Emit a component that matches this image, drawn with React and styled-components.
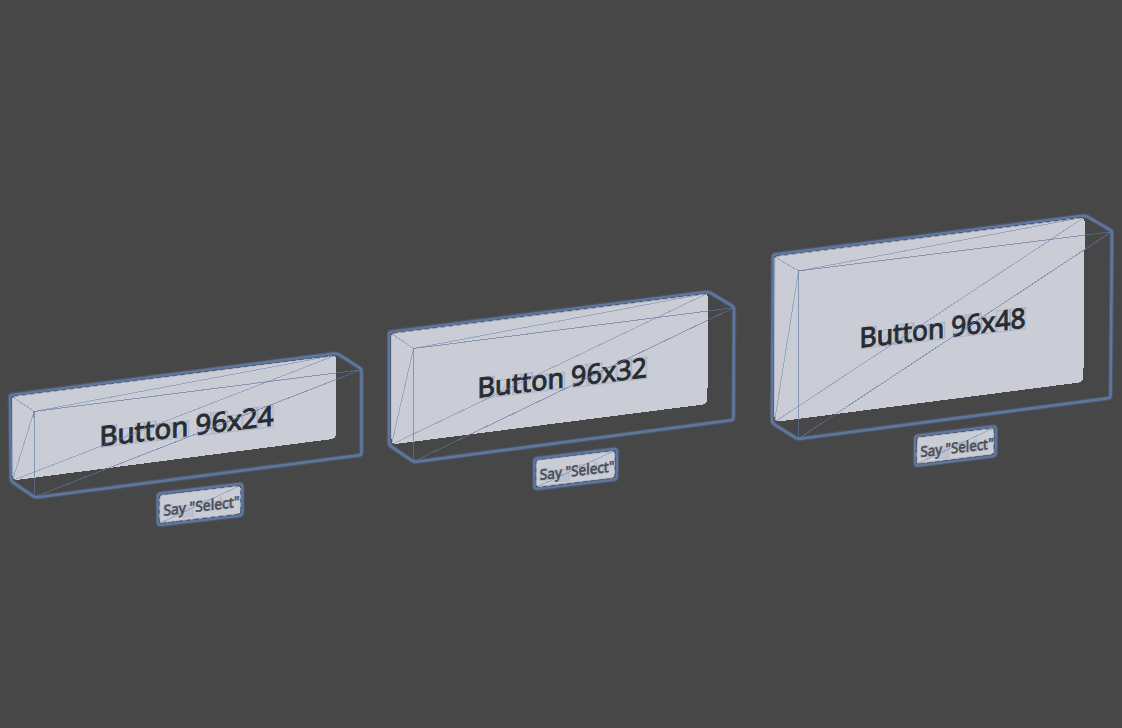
import React from 'react';
import styled, { createGlobalStyle } from 'styled-components';

const GlobalStyle = createGlobalStyle`
  body {
    margin: 0;
    background: #474747;
  }
`;

const Viewport = styled.main`
  width: 1122px;
  height: 728px;
  overflow: hidden;
  background: #474747;
`;

const Stage = styled.svg`
  display: block;
  width: 100%;
  height: 100%;
`;

const Face = styled.path`
  fill: #cacdd5;
  shape-rendering: crispEdges;
`;

const Seam = styled.path`
  fill: none;
  stroke: #474b54;
  stroke-width: 0.8;
  stroke-dasharray: 4 4;
`;

const Halo = styled.path`
  fill: none;
  stroke: #5a79ad;
  stroke-opacity: 0.35;
  stroke-width: 4.8;
  stroke-linejoin: round;
`;

const Outline = styled.path`
  fill: none;
  stroke: #60769c;
  stroke-width: 2.6;
  stroke-linejoin: round;
`;

const Edge = styled.path`
  fill: none;
  stroke: #5f779f;
  stroke-width: 1;
  stroke-opacity: ${(p) => (p.$strong ? 0.64 : 0.44)};
  shape-rendering: crispEdges;
`;

const GlyphQuad = styled.path`
  fill: #7180a5;
  fill-opacity: ${(p) => (p.$small ? 0.14 : 0.02)};
  stroke: #7180a5;
  stroke-width: 0.9;
  stroke-opacity: ${(p) => (p.$small ? 0.18 : 0.34)};
`;

const Label = styled.text`
  font-family: 'Noto Sans', 'Open Sans', sans-serif;
  font-size: ${(p) => (p.$small ? 14.6 : 27.4)}px;
  fill: ${(p) => (p.$small ? '#484c55' : '#282c32')};
  stroke: ${(p) => (p.$small ? '#484c55' : '#282c32')};
  stroke-width: ${(p) => (p.$small ? 0.55 : 0.95)}px;
  white-space: pre;
`;

const poly = (pts, close = true) =>
  'M' + pts.map((p) => p.join(' ')).join('L') + (close ? 'Z' : '');

function rounded(pts, r) {
  const toward = (a, b) => {
    const d = Math.hypot(b[0] - a[0], b[1] - a[1]);
    return [a[0] + ((b[0] - a[0]) * r) / d, a[1] + ((b[1] - a[1]) * r) / d];
  };
  return (
    pts
      .map((p, i) => {
        const a = toward(p, pts[(i + pts.length - 1) % pts.length]);
        const b = toward(p, pts[(i + 1) % pts.length]);
        return `${i ? 'L' : 'M'}${a.join(' ')}Q${p.join(' ')} ${b.join(' ')}`;
      })
      .join('') + 'Z'
  );
}

/* Glyph boxes as [left, right, top, bottom] fractions of the label width and font size. */
const BUTTON_GLYPHS = [
  [0, 0.088, 0.74, -0.03], [0.105, 0.185, 0.56, -0.03], [0.2, 0.255, 0.69, -0.03],
  [0.265, 0.32, 0.69, -0.03], [0.328, 0.413, 0.57, -0.03], [0.432, 0.51, 0.57, -0.03],
  [0.563, 0.645, 0.75, -0.03], [0.655, 0.735, 0.75, -0.03], [0.738, 0.82, 0.56, -0.03],
  [0.828, 0.91, 0.75, -0.03], [0.914, 1.004, 0.75, -0.03],
];
const SELECT_GLYPHS = [
  [0, 0.11, 0.75, -0.03], [0.13, 0.24, 0.57, -0.03], [0.25, 0.39, 0.56, -0.26],
  [0.44, 0.51, 0.75, 0.44], [0.53, 0.63, 0.75, -0.03], [0.64, 0.73, 0.57, -0.03],
  [0.74, 0.77, 0.78, -0.03], [0.78, 0.86, 0.57, -0.03], [0.86, 0.92, 0.57, -0.03],
];

function SceneLabel({ at, width, slope, small, children }) {
  const size = small ? 14.6 : 27.4;
  const glyphs = small ? SELECT_GLYPHS : BUTTON_GLYPHS;
  return (
    <g transform={`matrix(1 ${slope} 0 1 ${at[0]} ${at[1]})`}>
      {glyphs.map(([l, r, t, b], i) => {
        const x = l * width;
        const x2 = r * width;
        return (
          <GlyphQuad
            key={i}
            $small={small}
            d={`M${x} ${-t * size}H${x2}V${-b * size}H${x}Z${small ? '' : `M${x} ${-b * size}L${x2} ${-t * size}`}`}
          />
        );
      })}
      <Label
        $small={small}
        x={small ? -0.4 : -2}
        y={small ? -0.2 : -0.5}
        textLength={width + (small ? 0.8 : 3)}
        lengthAdjust="spacingAndGlyphs"
      >
        {children}
      </Label>
    </g>
  );
}

function HolographicButton({ face, hull, front, label, at, width, slope }) {
  const [tl, tr, , bl] = face;
  const right = [hull[2][0] - 0.5, hull[2][1] + 0.8];
  const bottom = [front[0] + 0.2, hull[4][1] - 0.5];
  return (
    <g>
      <Face d={rounded(face, 5.5)} />
      <SceneLabel at={at} width={width} slope={slope}>{label}</SceneLabel>
      <Edge d={poly([tl, front, tr], false)} />
      <Edge d={poly([front, bl, tr], false)} />
      <Edge $strong d={poly([right, front, bottom, right], false)} />
      <Halo d={rounded(hull, 2.5)} />
      <Outline d={rounded(hull, 2.5)} />
      <Seam d={poly([[tl[0] + 3, tl[1]], [tr[0] - 2, tr[1] + 0.3]], false)} />
    </g>
  );
}

function SpeechHint({ face, at, width, slope }) {
  const [tl, tr, br, bl] = face;
  const hull = [
    [tl[0] - 1.3, tl[1] - 1.3], [tr[0] + 1.6, tr[1] - 1.5],
    [br[0] + 1.6, br[1] + 1.3], [bl[0] - 1.3, bl[1] + 1.6],
  ];
  return (
    <g>
      <Face d={rounded(face, 4)} />
      <Edge d={poly([bl, tr], false)} />
      <SceneLabel small at={at} width={width} slope={slope}>Say "Select"</SceneLabel>
      <Halo d={rounded(hull, 3)} />
      <Outline d={rounded(hull, 3)} />
      <Seam d={rounded(face, 4)} />
    </g>
  );
}

const BUTTONS = [
  {
    label: 'Button 96x24', at: [101.5, 446.5], width: 171, slope: -0.12, front: [34, 411.5],
    face: [[11.5, 396], [336.4, 355], [336.4, 438.5], [12.5, 480.5]],
    hull: [[10, 395], [337, 353.3], [361.5, 369], [361.5, 455], [35, 497.5], [11, 481]],
  },
  {
    label: 'Button 96x32', at: [479.5, 398], width: 166.5, slope: -0.122, front: [413.5, 348.5],
    face: [[390.5, 333], [708.2, 293], [707.4, 404], [391.5, 444.5]],
    hull: [[389, 332], [708.5, 291.7], [734, 307], [733.5, 420], [414, 462], [389, 445]],
  },
  {
    label: 'Button 96x48', at: [861.5, 348], width: 163, slope: -0.122, front: [798.5, 271],
    face: [[773.5, 256], [1084.8, 217], [1083.4, 382], [774.5, 422]],
    hull: [[773, 254.7], [1085.5, 215.5], [1112, 231], [1110.5, 398], [797.5, 439], [772, 423]],
  },
];

const HINTS = [
  { at: [163.8, 515.8], width: 75.5, slope: -0.118, face: [[159.2, 495], [240.7, 485.3], [240.7, 514], [159.2, 523.5]] },
  { at: [540.2, 480.2], width: 74, slope: -0.118, face: [[535.8, 460], [615.3, 450.3], [615, 478], [535.8, 487.5]] },
  { at: [920.9, 457.2], width: 72.3, slope: -0.118, face: [[916.6, 437.3], [994.3, 427.7], [994, 454.5], [916.4, 464.2]] },
];

export default function App() {
  return (
    <>
      <GlobalStyle />
      <Viewport>
        <Stage viewBox="0 0 1122 728">
          {BUTTONS.map((button) => <HolographicButton key={button.label} {...button} />)}
          {HINTS.map((hint) => <SpeechHint key={hint.at[0]} {...hint} />)}
        </Stage>
      </Viewport>
    </>
  );
}
